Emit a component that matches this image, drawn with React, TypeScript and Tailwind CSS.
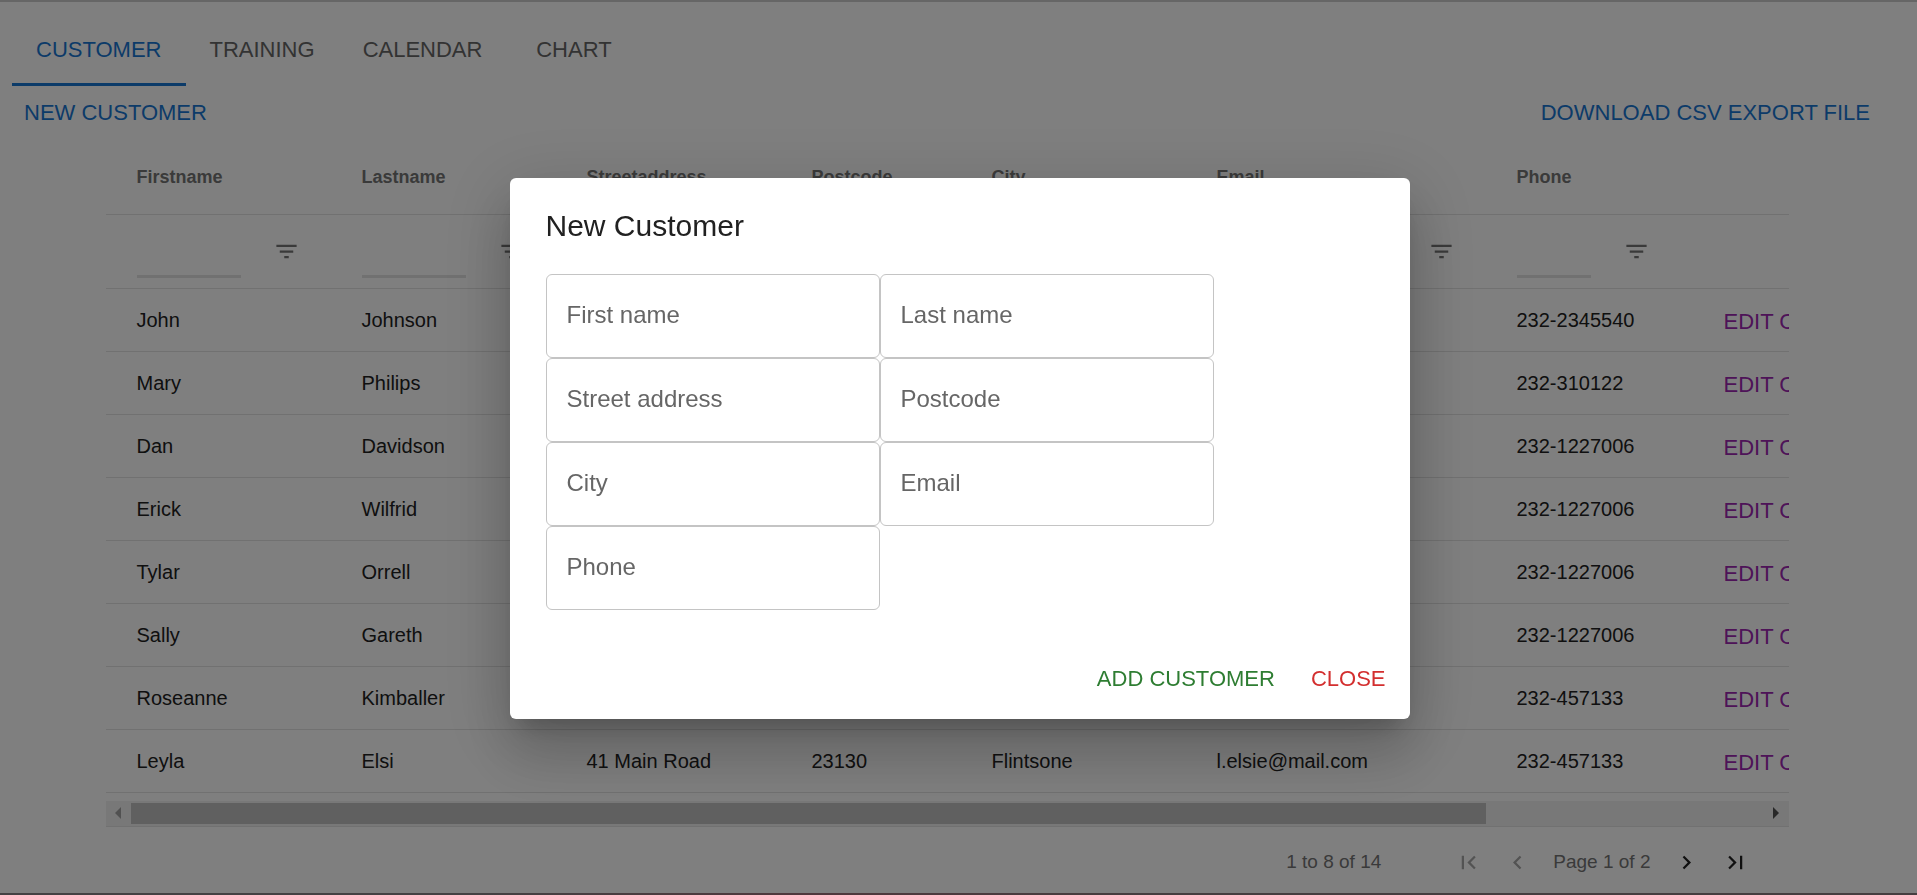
import { useState } from "react";
import {
  MdChevronLeft,
  MdChevronRight,
  MdFilterList,
  MdFirstPage,
  MdLastPage,
} from "react-icons/md";

const tabs = ["Customer", "Training", "Calendar", "Chart"];

const columns = [
  { name: "Firstname", width: "w-[225px]" },
  { name: "Lastname", width: "w-[225px]" },
  { name: "Streetaddress", width: "w-[225px]" },
  { name: "Postcode", width: "w-[180px]" },
  { name: "City", width: "w-[225px]" },
  { name: "Email", width: "w-[300px]" },
  { name: "Phone", width: "w-[195px]" },
];

const rows = [
  ["John", "Johnson", "", "", "", "", "232-2345540"],
  ["Mary", "Philips", "", "", "", "", "232-310122"],
  ["Dan", "Davidson", "", "", "", "", "232-1227006"],
  ["Erick", "Wilfrid", "", "", "", "", "232-1227006"],
  ["Tylar", "Orrell", "", "", "", "", "232-1227006"],
  ["Sally", "Gareth", "", "", "", "", "232-1227006"],
  ["Roseanne", "Kimballer", "", "", "", "", "232-457133"],
  ["Leyla", "Elsi", "41 Main Road", "23130", "Flintsone", "l.elsie@mail.com", "232-457133"],
];

const fields = ["First name", "Last name", "Street address", "Postcode", "City", "Email", "Phone"];

function TabBar() {
  return (
    <nav className="flex">
      {tabs.map((tab, i) => (
        <button
          key={tab}
          className={
            i === 0
              ? "h-[72px] min-w-[135px] border-b-3 border-[#1976d2] px-6 pt-px text-[22px] text-[#1976d2] uppercase"
              : "h-[72px] min-w-[135px] px-6 pb-0.5 text-[22px] text-[#666666] uppercase"
          }
        >
          {tab}
        </button>
      ))}
    </nav>
  );
}

function CustomerTable() {
  return (
    <div className="overflow-hidden">
      <table className="w-[2025px] table-fixed border-collapse text-left">
        <thead>
          <tr className="h-[74px] border-b border-[#e2e2e2]">
            {columns.map((c) => (
              <th key={c.name} className={`${c.width} px-[31px] text-lg font-bold text-[#757575]`}>
                {c.name}
              </th>
            ))}
            <td />
          </tr>
          <tr className="h-[74px] border-b border-[#e2e2e2]">
            {columns.map((c) => (
              <td key={c.name} className="px-[31px]">
                <div className="flex items-center gap-8">
                  <input
                    aria-label={`${c.name} filter`}
                    className="h-[53px] w-0 flex-1 border-b-3 border-[#e2e2e2] outline-none"
                  />
                  <button aria-label={`Open ${c.name} filter`}>
                    <MdFilterList className="size-[27px] text-[#757575]" />
                  </button>
                </div>
              </td>
            ))}
            <td />
          </tr>
        </thead>
        <tbody>
          {rows.map((row, r) => (
            <tr key={r} className="h-[63px] border-b border-[#e2e2e2]">
              {row.map((cell, c) => (
                <td key={c} className="px-[31px] text-[20px] text-[#212121]">
                  {cell}
                </td>
              ))}
              <td className="px-[31px] pt-1">
                <button className="px-3 text-[22px] whitespace-nowrap text-[#9c27b0]">
                  EDIT CUSTOMER
                </button>
              </td>
            </tr>
          ))}
        </tbody>
      </table>
    </div>
  );
}

function HorizontalScrollbar() {
  return (
    <div className="mt-2 flex h-[26px] items-center border-b border-[#e2e2e2] bg-[#f1f1f1]">
      <div className="flex w-[25px] justify-center">
        <svg viewBox="0 0 6 12" className="h-3 w-1.5 fill-[#a3a3a3]">
          <path d="M6 0v12L0 6z" />
        </svg>
      </div>
      <div className="flex-1">
        <div className="h-[21px] w-[83%] bg-[#c1c1c1]" />
      </div>
      <div className="flex w-[25px] justify-center">
        <svg viewBox="0 0 6 12" className="h-3 w-1.5 fill-[#505050]">
          <path d="M0 0v12l6-6z" />
        </svg>
      </div>
    </div>
  );
}

function Pagination() {
  return (
    <div className="flex h-[66px] items-center justify-end gap-[22px] pt-1.5 pr-10 text-[19px] text-[#757575]">
      <span className="mr-[52px]">1 to 8 of 14</span>
      <button aria-label="First page" disabled>
        <MdFirstPage className="size-[27px] text-[#a6a6a6]" />
      </button>
      <button aria-label="Previous page" disabled>
        <MdChevronLeft className="size-[27px] text-[#a6a6a6]" />
      </button>
      <span>Page 1 of 2</span>
      <button aria-label="Next page">
        <MdChevronRight className="size-[27px] text-[#212121]" />
      </button>
      <button aria-label="Last page">
        <MdLastPage className="size-[27px] text-[#212121]" />
      </button>
    </div>
  );
}

function NewCustomerDialog({ onClose }: { onClose: () => void }) {
  return (
    <div className="fixed inset-0 flex items-center justify-center bg-black/50 pt-0.5 pl-0.5">
      <div
        role="dialog"
        aria-modal="true"
        aria-labelledby="dialog-title"
        className="w-[900px] max-w-full rounded-md bg-white shadow-[0_16px_22px_-10px_rgba(0,0,0,0.2),0_36px_57px_4px_rgba(0,0,0,0.14),0_14px_69px_12px_rgba(0,0,0,0.12)]"
      >
        <h2 id="dialog-title" className="px-9 py-6 text-[30px] leading-[48px] text-[#212121]">
          New Customer
        </h2>
        <form className="grid grid-cols-[334px_334px] px-9 pb-[30px]">
          {fields.map((field) => (
            <div key={field} className="grid">
              <label
                htmlFor={field}
                className="col-start-1 row-start-1 self-center px-[21px] pb-0.5 text-2xl text-[#666666]"
              >
                {field}
              </label>
              <input
                id={field}
                className="col-start-1 row-start-1 h-[84px] min-w-0 rounded-md border border-[#c4c4c4] px-5 text-2xl"
              />
            </div>
          ))}
        </form>
        <div className="flex justify-end gap-3 p-3 text-[22px]">
          <button className="h-[55px] px-3 pb-0.5 text-[#2e7d32]">ADD CUSTOMER</button>
          <button className="h-[55px] px-3 pb-0.5 text-[#d32f2f]" onClick={onClose}>
            CLOSE
          </button>
        </div>
      </div>
    </div>
  );
}

export default function App() {
  const [open, setOpen] = useState(true);
  return (
    <div className="flex min-h-screen flex-col border-t-2 border-[#cccccc] bg-white font-['Liberation_Sans',Arial,sans-serif]">
      <div className="flex-1 pt-3 pr-[35px] pl-3">
        <TabBar />
        <div className="flex h-[54px] items-center justify-between pb-px text-[22px] text-[#1976d2]">
          <button className="px-3" onClick={() => setOpen(true)}>
            NEW CUSTOMER
          </button>
          <a href="#export" className="px-3">
            DOWNLOAD CSV EXPORT FILE
          </a>
        </div>
        <main className="mx-auto w-[90%]">
          <CustomerTable />
          <HorizontalScrollbar />
          <Pagination />
        </main>
      </div>
      <div className="h-0.5 bg-linear-to-r from-[#888286] from-25% via-[#a0707a] via-42% to-[#8c7c80] to-60%" />
      {open && <NewCustomerDialog onClose={() => setOpen(false)} />}
    </div>
  );
}
